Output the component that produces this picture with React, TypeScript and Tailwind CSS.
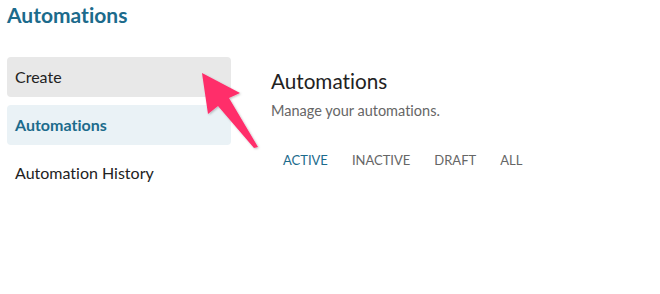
import React from "react";

export default function App() {
  return (
    <div className="relative w-[660px] h-[294px] bg-white overflow-hidden [font-variant-ligatures:none]" style={{ fontFamily: "Lato, 'Open Sans', sans-serif" }}>
      <div className="pl-[7px] pt-[3px] text-[21px] font-bold leading-[24px] text-[#1c6b8c]">Automations</div>
      <div className="flex mt-[30px]">
        <div className="w-[224px] ml-[7px] flex flex-col gap-2">
          <div className="h-10 rounded bg-[#e8e8e8] px-2 flex items-center text-[16px] text-[#222]">Create</div>
          <div className="h-10 rounded bg-[#eaf2f6] px-2 flex items-center text-[16px] font-bold text-[#1c6b8c]">Automations</div>
          <div className="h-10 rounded px-2 flex items-center text-[16px] text-[#222]">Automation History</div>
        </div>
        <div className="ml-[40px] pt-[11px]">
          <div className="text-[20.7px] leading-[26px] text-[#222]">Automations</div>
          <div className="mt-[7px] text-[14.5px] leading-[20px] text-[#666]">Manage your automations.</div>
          <div className="mt-[29px] ml-[12px] flex gap-6 text-[13px] leading-[20px] text-[#666]">
            <span className="text-[#1c6b8c]">ACTIVE</span>
            <span>INACTIVE</span>
            <span>DRAFT</span>
            <span>ALL</span>
          </div>
        </div>
      </div>
      <svg className="absolute left-0 top-0" width="660" height="294" viewBox="0 0 660 294">
        <defs>
          <filter id="sh" x="-20%" y="-20%" width="140%" height="140%">
            <feDropShadow dx="1" dy="1" stdDeviation="1" floodColor="#000" floodOpacity="0.25" />
          </filter>
        </defs>
        <polygon
          points="202,73 240,93 229,98 258,147 254,148 218,106 208,114"
          fill="#ff2d6b"
          filter="url(#sh)"
        />
      </svg>
    </div>
  );
}
